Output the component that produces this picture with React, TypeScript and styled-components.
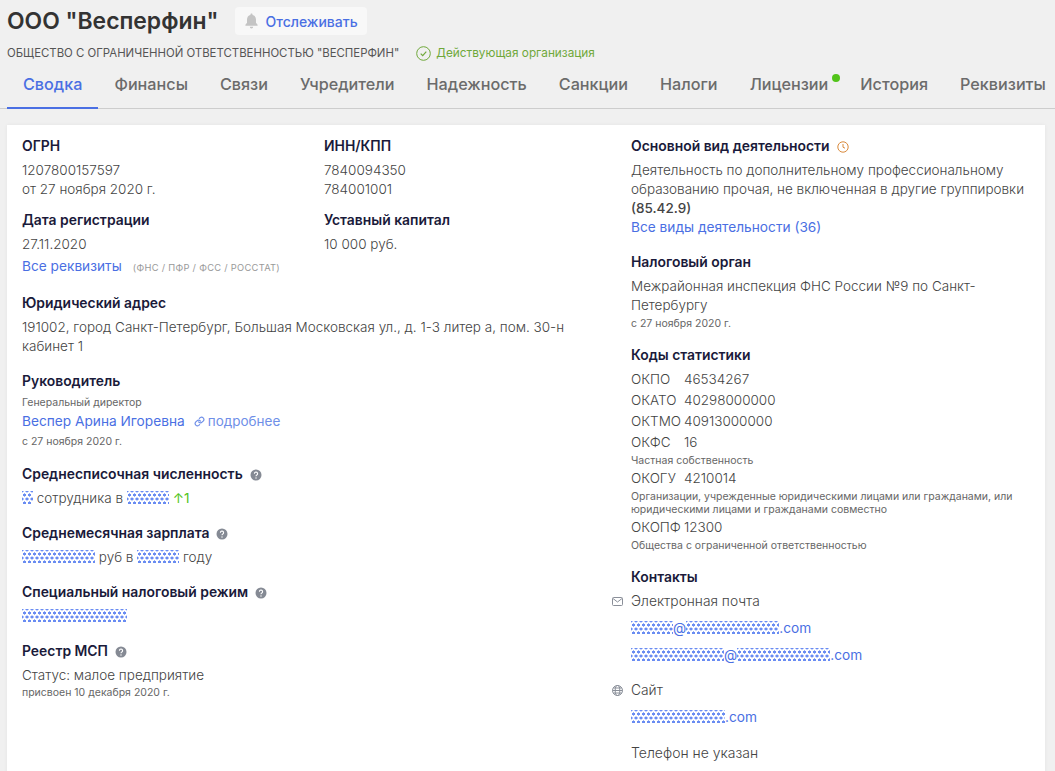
import { createGlobalStyle } from 'styled-components';
import styled from 'styled-components';

const GlobalStyle = createGlobalStyle`
html, body {
  background: #f0f0f0;
  margin: 0;
  height: 771px;
  overflow: hidden;
}
body {
  color: #444;
  font-family: Inter, "Noto Sans", sans-serif;
  font-size: 13.5px;
  font-weight: 300;
  line-height: 19px;
}
`;

const Page = styled.div`
  padding: 0 0 0 7px;
  width: 1048px;
  height: 771px;
  overflow: hidden;
`;

const TitleRow = styled.div`
  align-items: center;
  display: flex;
  gap: 17px;
  height: 42px;
`;

const Title = styled.h1`
  color: #333;
  font-size: 22.9px;
  font-weight: 600;
  line-height: 30px;
  margin: 0;
`;

const WatchButton = styled.button`
  align-items: center;
  background: #f8f8f8;
  border: none;
  border-radius: 4px;
  color: #4a6fe3;
  display: flex;
  font-family: inherit;
  font-size: 14px;
  font-weight: 500;
  gap: 6px;
  height: 28px;
  padding: 0 9px 0 9px;
  width: 132px;
`;

const SubRow = styled.div`
  align-items: center;
  display: flex;
  gap: 17px;
  height: 22px;
`;

const FullName = styled.span`
  color: #555;
  font-size: 11.4px;
  font-weight: 400;
`;

const Status = styled.span`
  align-items: center;
  color: #6fa83a;
  display: flex;
  font-size: 11.8px;
  font-weight: 400;
  gap: 5px;
`;

const Tabs = styled.nav`
  border-bottom: 1px solid #cdcdcd;
  box-sizing: border-box;
  display: flex;
  height: 45px;
  margin-left: -7px;
  padding-left: 7px;
  white-space: nowrap;
  width: 1055px;
`;

const Tab = styled.a<{ $active?: boolean }>`
  align-items: center;
  border-bottom: 2px solid ${(p) => (p.$active ? '#4a6fe3' : 'transparent')};
  box-sizing: border-box;
  color: ${(p) => (p.$active ? '#4a6fe3' : '#6b6b6b')};
  display: flex;
  font-size: 16.2px;
  font-weight: 500;
  height: 45px;
  padding: 0 16px 2px;
  position: relative;
`;

const TabDot = styled.i`
  background: #52c41a;
  border-radius: 50%;
  height: 8px;
  position: absolute;
  right: 4px;
  top: 10px;
  width: 8px;
`;

const Card = styled.main`
  background: #fff;
  box-shadow: 0 0 4px rgba(0, 0, 0, 0.05);
  box-sizing: border-box;
  display: grid;
  gap: 0 36px;
  grid-template-columns: 573px 1fr;
  height: 660px;
  margin-top: 16px;
  padding: 12px 15px;
  width: 1038px;
`;

const Column = styled.div`
  display: flex;
  flex-direction: column;
`;

const Pair = styled.div`
  display: grid;
  grid-template-columns: 302px 1fr;
`;

const Block = styled.section<{ $gap?: number }>`
  margin-bottom: ${(p) => p.$gap ?? 16}px;
`;

const Label = styled.h3`
  align-items: center;
  color: #1a1a3a;
  display: flex;
  font-size: 13.9px;
  font-weight: 600;
  gap: 7px;
  line-height: 19px;
  margin: 0 0 5px;
`;

const Text = styled.div`
  line-height: 19px;
`;

const WideText = styled(Text)`
  font-size: 14px;
`;

const Code = styled.b`
  font-weight: 500;
`;

const Small = styled.div`
  color: #666;
  font-size: 10.5px;
  font-weight: 400;
  line-height: 13px;
  padding: 1px 0;
`;

const Position = styled(Small)`
  margin-top: -1px;
`;

const Since = styled(Small)`
  margin-top: 1px;
`;

const StatList = styled.div`
  margin-top: -1px;
`;

const StatRow = styled.div`
  align-items: center;
  display: flex;
  height: 21px;
`;

const StatKey = styled.span`
  width: 53px;
`;

const Link = styled.a`
  color: #4a6fe3;
  font-size: 13.7px;
  font-weight: 400;
`;

const Lead = styled.div`
  align-items: center;
  display: flex;
  gap: 9px;
  line-height: 19px;
  margin: 2px 0 3px;
`;

const MoreLink = styled.a`
  align-items: center;
  color: #6f8fe8;
  display: flex;
  font-weight: 400;
  gap: 3px;
`;

const Hint = styled.span`
  color: #999;
  font-size: 9.3px;
  font-weight: 400;
  letter-spacing: 0.3px;
  margin-left: 11px;
`;

const Masked = styled.span<{ $w: number }>`
  background-image:
    radial-gradient(circle at center, #4f78f0 1.4px, transparent 1.7px),
    radial-gradient(circle at center, #4f78f0 1.4px, transparent 1.7px);
  background-position: 0 0, 2.5px 4px;
  background-size: 5px 8px;
  display: inline-block;
  height: 13px;
  opacity: 0.85;
  vertical-align: -1px;
  width: ${(p) => p.$w}px;
`;

const Delta = styled.span`
  color: #52c41a;
  font-weight: 400;
`;

const Contact = styled.div`
  align-items: center;
  display: flex;
  font-size: 13.8px;
  position: relative;
`;

const ContactIcon = styled.span`
  color: #8a8f99;
  display: flex;
  left: -19px;
  position: absolute;
`;

const ContactLink = styled(Link)`
  display: block;
  margin-top: 8px;
`;

function HelpIcon() {
  return (
    <svg width="12" height="12" viewBox="0 0 12 12">
      <circle cx="6" cy="6" r="5.5" fill="#858a94" />
      <path d="M4.4 4.7a1.6 1.6 0 1 1 2.4 1.4c-.5.3-.8.6-.8 1.1" stroke="#fff" strokeWidth="1.1" fill="none" />
      <circle cx="6" cy="9" r=".7" fill="#fff" />
    </svg>
  );
}

export default function App() {
  const tabs = ['Финансы', 'Связи', 'Учредители', 'Надежность', 'Санкции', 'Налоги'];

  return (
    <>
      <GlobalStyle />
      <Page>
        <TitleRow>
          <Title>ООО "Весперфин"</Title>
          <WatchButton>
            <svg width="15" height="16" viewBox="0 0 14 15">
              <path d="M7 0.5c.6 0 1 .4 1 1v.4c2 .5 3.2 2.1 3.2 4.2v3l1.5 2v.9H1.3v-.9l1.5-2v-3c0-2.1 1.2-3.7 3.2-4.2v-.4c0-.6.4-1 1-1z" fill="#c4c4c4" />
              <path d="M5.4 13h3.2a1.6 1.6 0 0 1-3.2 0z" fill="#c4c4c4" />
            </svg>
            Отслеживать
          </WatchButton>
        </TitleRow>
        <SubRow>
          <FullName>ОБЩЕСТВО С ОГРАНИЧЕННОЙ ОТВЕТСТВЕННОСТЬЮ "ВЕСПЕРФИН"</FullName>
          <Status>
            <svg width="15" height="15" viewBox="0 0 15 15" fill="none" stroke="#6fa83a">
              <circle cx="7.5" cy="7.5" r="6.8" />
              <path d="M4.7 7.6l2 2 3.6-4" strokeWidth="1.2" />
            </svg>
            Действующая организация
          </Status>
        </SubRow>
        <Tabs>
          <Tab $active>Сводка</Tab>
          {tabs.map((t) => (
            <Tab key={t}>{t}</Tab>
          ))}
          <Tab>
            Лицензии
            <TabDot />
          </Tab>
          <Tab>История</Tab>
          <Tab>Реквизиты</Tab>
        </Tabs>
        <Card>
          <Column>
            <Pair>
              <div>
                <Block $gap={12}>
                  <Label>ОГРН</Label>
                  <Text>1207800157597</Text>
                  <Text>от 27 ноября 2020 г.</Text>
                </Block>
                <Block $gap={3}>
                  <Label>Дата регистрации</Label>
                  <Text>27.11.2020</Text>
                </Block>
              </div>
              <div>
                <Block $gap={12}>
                  <Label>ИНН/КПП</Label>
                  <Text>7840094350</Text>
                  <Text>784001001</Text>
                </Block>
                <Block $gap={3}>
                  <Label>Уставный капитал</Label>
                  <Text>10 000 руб.</Text>
                </Block>
              </div>
            </Pair>
            <Block $gap={17}>
              <Text>
                <Link>Все реквизиты</Link>
                <Hint>(ФНС / ПФР / ФСС / РОССТАТ)</Hint>
              </Text>
            </Block>
            <Block>
              <Label>Юридический адрес</Label>
              <Text>
                191002, город Санкт-Петербург, Большая Московская ул., д. 1-3 литер а, пом. 30-н кабинет 1
              </Text>
            </Block>
            <Block>
              <Label>Руководитель</Label>
              <Position>Генеральный директор</Position>
              <Lead>
                <Link>Веспер Арина Игоревна</Link>
                <MoreLink>
                  <svg width="11" height="11" viewBox="0 0 24 24" fill="none" stroke="currentColor" strokeWidth="2.6" strokeLinecap="round">
                    <path d="M10 13a5 5 0 0 0 7.5.5l3-3a5 5 0 0 0-7-7l-1.7 1.7" />
                    <path d="M14 11a5 5 0 0 0-7.5-.5l-3 3a5 5 0 0 0 7 7l1.7-1.7" />
                  </svg>
                  подробнее
                </MoreLink>
              </Lead>
              <Small>с 27 ноября 2020 г.</Small>
            </Block>
            <Block>
              <Label>
                Среднесписочная численность <HelpIcon />
              </Label>
              <Text>
                <Masked $w={11} /> сотрудника в <Masked $w={42} /> <Delta>↑1</Delta>
              </Text>
            </Block>
            <Block>
              <Label>
                Среднемесячная зарплата <HelpIcon />
              </Label>
              <Text>
                <Masked $w={73} /> руб в <Masked $w={42} /> году
              </Text>
            </Block>
            <Block>
              <Label>
                Специальный налоговый режим <HelpIcon />
              </Label>
              <Text>
                <Masked $w={105} />
              </Text>
            </Block>
            <Block>
              <Label>
                Реестр МСП <HelpIcon />
              </Label>
              <Text>Статус: малое предприятие</Text>
              <Small>присвоен 10 декабря 2020 г.</Small>
            </Block>
          </Column>
          <Column>
            <Block>
              <Label>
                Основной вид деятельности
                <svg width="12" height="12" viewBox="0 0 12 12" fill="none" stroke="#d98a3d">
                  <circle cx="6" cy="6" r="5.2" />
                  <path d="M6 3v3.2l2 1" />
                </svg>
              </Label>
              <Text>
                Деятельность по дополнительному профессиональному образованию прочая, не включенная в другие группировки <Code>(85.42.9)</Code>
              </Text>
              <Link>Все виды деятельности (36)</Link>
            </Block>
            <Block $gap={15}>
              <Label>Налоговый орган</Label>
              <Text>Межрайонная инспекция ФНС России №9 по Санкт-Петербургу</Text>
              <Since>с 27 ноября 2020 г.</Since>
            </Block>
            <Block $gap={15}>
              <Label>Коды статистики</Label>
              <StatList>
                <StatRow><StatKey>ОКПО</StatKey>46534267</StatRow>
                <StatRow><StatKey>ОКАТО</StatKey>40298000000</StatRow>
                <StatRow><StatKey>ОКТМО</StatKey>40913000000</StatRow>
                <StatRow><StatKey>ОКФС</StatKey>16</StatRow>
                <Small>Частная собственность</Small>
                <StatRow><StatKey>ОКОГУ</StatKey>4210014</StatRow>
                <Small>Организации, учрежденные юридическими лицами или гражданами, или юридическими лицами и гражданами совместно</Small>
                <StatRow><StatKey>ОКОПФ</StatKey>12300</StatRow>
                <Small>Общества с ограниченной ответственностью</Small>
              </StatList>
            </Block>
            <Block>
              <Label>Контакты</Label>
              <Contact>
                <ContactIcon>
                  <svg width="11" height="9" viewBox="0 0 11 9" fill="none" stroke="currentColor">
                    <rect x=".5" y=".5" width="10" height="8" rx="1" />
                    <path d="M1 1.5l4.5 3.5L10 1.5" />
                  </svg>
                </ContactIcon>
                Электронная почта
              </Contact>
              <ContactLink><Masked $w={42} />@<Masked $w={93} />.com</ContactLink>
              <ContactLink><Masked $w={93} />@<Masked $w={93} />.com</ContactLink>
            </Block>
            <Block>
              <Contact>
                <ContactIcon>
                  <svg width="11" height="11" viewBox="0 0 11 11" fill="none" stroke="currentColor">
                    <circle cx="5.5" cy="5.5" r="5" />
                    <ellipse cx="5.5" cy="5.5" rx="2.3" ry="5" />
                    <path d="M.5 5.5h10M1.2 3h8.6M1.2 8h8.6" />
                  </svg>
                </ContactIcon>
                Сайт
              </Contact>
              <ContactLink><Masked $w={94} />.com</ContactLink>
            </Block>
            <WideText>Телефон не указан</WideText>
          </Column>
        </Card>
      </Page>
    </>
  );
}
